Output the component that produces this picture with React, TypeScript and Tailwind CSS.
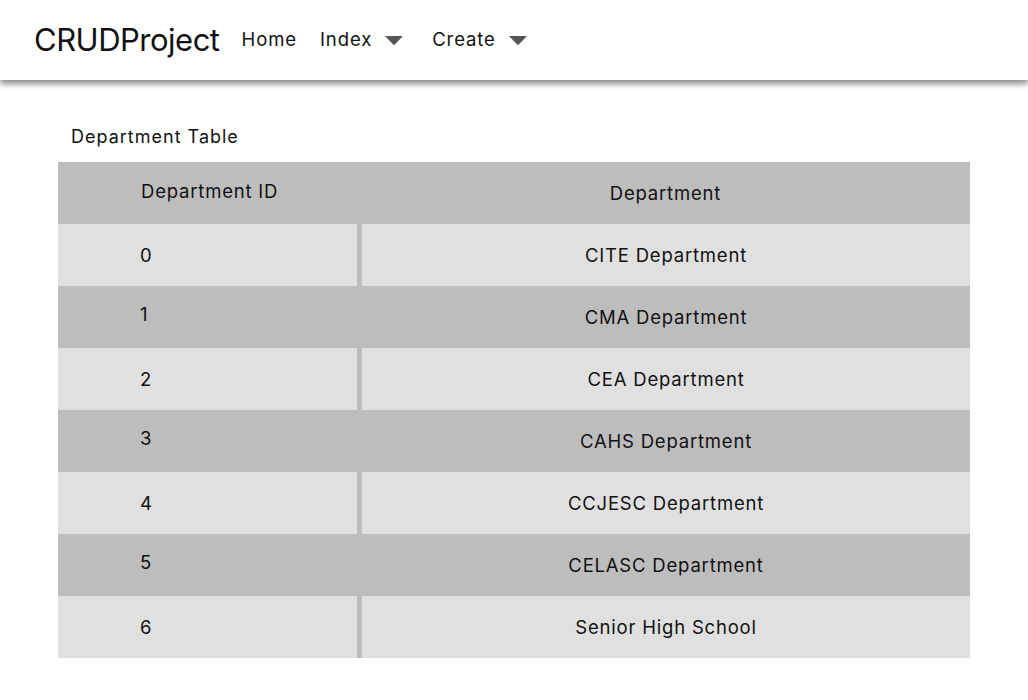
const departments = [
  { id: 0, name: "CITE Department" },
  { id: 1, name: "CMA Department" },
  { id: 2, name: "CEA Department" },
  { id: 3, name: "CAHS Department" },
  { id: 4, name: "CCJESC Department" },
  { id: 5, name: "CELASC Department" },
  { id: 6, name: "Senior High School" },
];

const Caret = () => (
  <svg width="18" height="10" viewBox="0 0 18 10" className="ml-[13px] mt-[1px]">
    <path d="M0 1 Q0 0 1 0 H17 Q18 0 17.3 0.8 L9.8 8.6 Q9 9.4 8.2 8.6 L0.7 0.8 Z" fill="#555555" />
  </svg>
);

const Navbar = () => (
  <nav className="relative z-10 flex h-[80px] items-center bg-white px-[34px] shadow-[0_4px_6px_rgba(0,0,0,0.45)]">
    <h1 className="mt-[-1px] text-[31px] leading-none text-[#111] tracking-[-0.5px]">CRUDProject</h1>
    <ul className="ml-[22px] flex items-center text-[18.5px] tracking-[0.9px] text-[#111]">
      <li>Home</li>
      <li className="ml-[23px] flex items-center">
        Index
        <Caret />
      </li>
      <li className="ml-[29px] flex items-center">
        Create
        <Caret />
      </li>
    </ul>
  </nav>
);

const App = () => {
  return (
    <div className="min-h-[700px] w-full bg-white font-['Inter',sans-serif] text-[#111]">
      <Navbar />
      <div className="px-[58px] pt-[44px]">
        <h2 className="mb-[12px] pl-[13px] text-[18px] leading-[26px] tracking-[1px]">Department Table</h2>
        <div className="w-[912px] text-[18.5px] tracking-[0.8px]">
          <div className="flex h-[62px] bg-[#bdbdbd]">
            <div className="w-[299px] pl-[83px] pt-[16px]">Department ID</div>
            <div className="flex flex-1 justify-center pt-[18px] pl-[4px]">Department</div>
          </div>
          {departments.map((d) => {
            const light = d.id % 2 === 0;
            return (
              <div
                key={d.id}
                className={light ? "flex h-[62px] bg-[#e0e0e0]" : "flex h-[62px] bg-[#bdbdbd]"}
              >
                <div
                  className={
                    light
                      ? "flex w-[299px] items-center pl-[82px] pt-[2px]"
                      : "flex w-[299px] items-center pl-[82px] pb-[4px]"
                  }
                >
                  {d.id}
                </div>
                <div className="w-[5px] bg-[#bdbdbd]" />
                <div className="flex flex-1 items-center justify-center pt-[2px]">{d.name}</div>
              </div>
            );
          })}
        </div>
      </div>
    </div>
  );
};

export default App;
